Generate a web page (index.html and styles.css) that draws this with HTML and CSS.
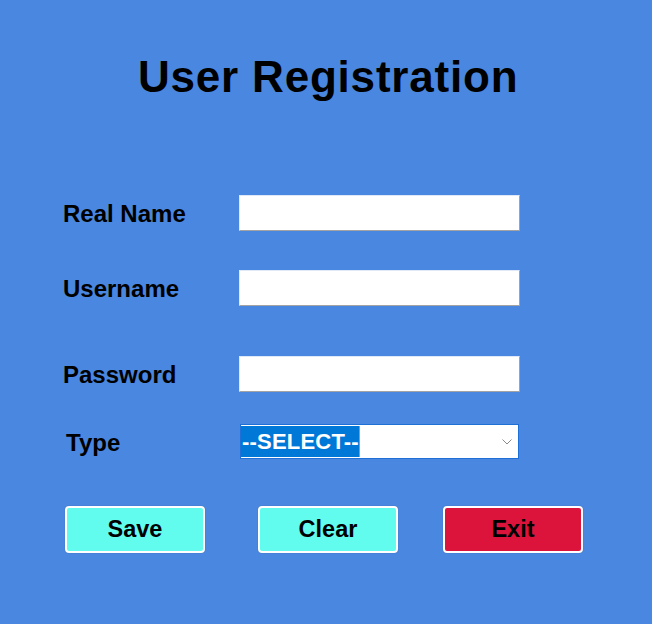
FILE: index.html
```html
<!DOCTYPE html>
<html lang="en">
<head>
<meta charset="utf-8">
<title>User Registration</title>
<link rel="stylesheet" href="styles.css">
</head>
<body>
<div class="page">
  <h1 class="title">User Registration</h1>
  <form class="form">
    <div class="row row-name">
      <label class="label">Real Name</label>
      <input class="field" type="text">
    </div>
    <div class="row row-user">
      <label class="label">Username</label>
      <input class="field" type="text">
    </div>
    <div class="row row-pass">
      <label class="label">Password</label>
      <input class="field" type="password">
    </div>
    <div class="row row-type">
      <label class="label label-type">Type</label>
      <div class="select">
        <span class="select-text">--SELECT--</span>
        <svg class="chevron" width="10" height="6" viewBox="0 0 10 6"><path d="M0.5 0.5 L5 5 L9.5 0.5" fill="none" stroke="#8a8a8a" stroke-width="1"/></svg>
      </div>
    </div>
    <div class="buttons">
      <button type="button" class="btn btn-save">Save</button>
      <button type="button" class="btn btn-clear">Clear</button>
      <button type="button" class="btn btn-exit">Exit</button>
    </div>
  </form>
</div>
</body>
</html>
```
FILE: styles.css
```css
html, body {
  margin: 0;
  padding: 0;
}
body {
  background: #4a87e0;
  font-family: "Liberation Sans", Arial, sans-serif;
  width: 652px;
  height: 624px;
  overflow: hidden;
}
.page {
  padding-top: 53px;
}
.title {
  margin: 0 0 0 138px;
  font-size: 44px;
  line-height: 48px;
  letter-spacing: 0.8px;
  font-weight: bold;
  color: #000;
}
.form {
  margin: 94px 0 0 0;
  padding-left: 63px;
}
.row {
  display: flex;
  align-items: center;
  height: 36px;
}
.row-user { margin-top: 39px; }
.row-pass { margin-top: 50px; }
.row-type { margin-top: 32px; height: 35px; }
.label {
  width: 176px;
  font-size: 24px;
  font-weight: bold;
  color: #000;
  padding-top: 2px;
}
.label-type {
  padding-left: 3px;
  width: 173px;
}
.field {
  box-sizing: border-box;
  width: 281px;
  height: 36px;
  margin: 0;
  padding: 0 4px;
  background: #fff;
  border: 1px solid;
  border-color: #dfe8f7 #a3a3a3 #a3a3a3 #dfe8f7;
  outline: none;
}
.select {
  box-sizing: border-box;
  width: 279px;
  height: 35px;
  margin-left: 1px;
  background: #fff;
  border: 1px solid #1e6fd6;
  display: flex;
  align-items: center;
  justify-content: space-between;
  padding: 0 6px 0 0;
}
.select-text {
  background: #0078d7;
  color: #fff;
  font-weight: bold;
  font-size: 22px;
  letter-spacing: 0.2px;
  line-height: 31px;
  padding: 0 0 0 1px;
  border-right: 1px solid #e0893a;
}
.chevron {
  display: block;
}
.buttons {
  display: flex;
  margin-top: 47px;
  padding-left: 2px;
}
.btn {
  box-sizing: border-box;
  width: 140px;
  height: 47px;
  border: 2px solid #fff;
  border-radius: 4px;
  box-shadow: 0 0 1px rgba(0,0,0,0.35);
  font-family: "Liberation Sans", Arial, sans-serif;
  font-weight: bold;
  font-size: 23.5px;
  color: #000;
  padding: 0;
  cursor: pointer;
}
.btn-save, .btn-clear {
  background: #62fcef;
}
.btn-clear { margin-left: 53px; }
.btn-exit {
  margin-left: 45px;
  background: #dc143c;
}
```
